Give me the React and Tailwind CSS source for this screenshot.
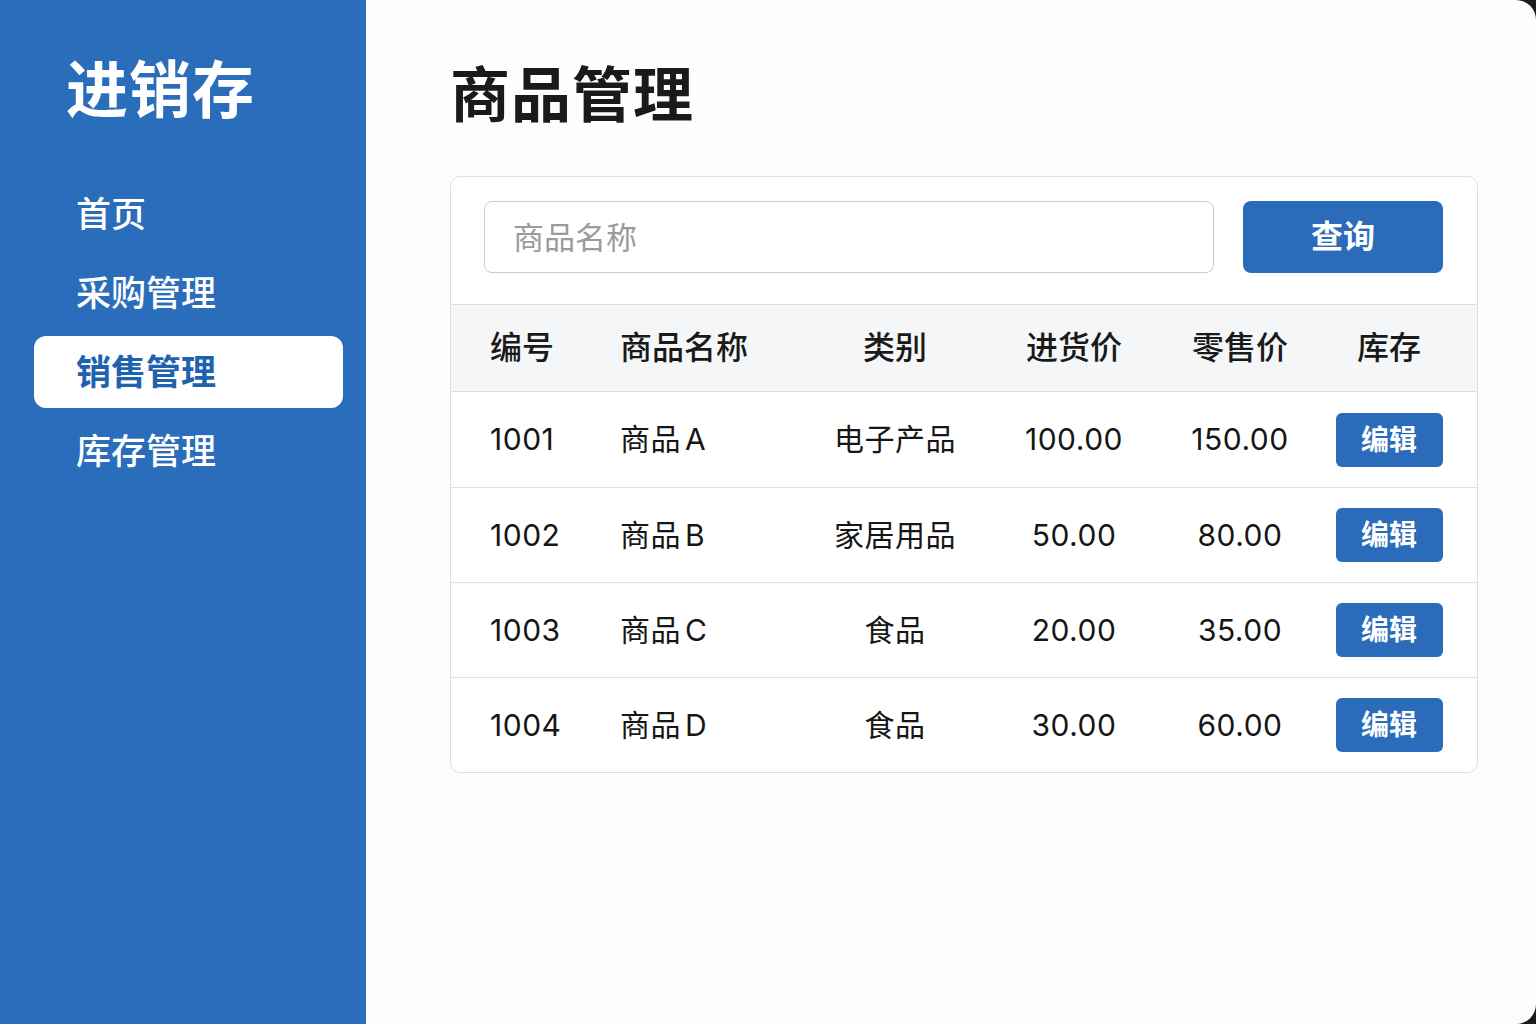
import React, { useState } from 'react';

const FONT = { fontFamily: 'Inter, "Noto Sans CJK SC", "Noto Sans", sans-serif' };

const navItems = ['首页', '采购管理', '销售管理', '库存管理'];

const products = [
  { id: '1001', name: '商品A', category: '电子产品', cost: '100.00', price: '150.00' },
  { id: '1002', name: '商品B', category: '家居用品', cost: '50.00', price: '80.00' },
  { id: '1003', name: '商品C', category: '食品', cost: '20.00', price: '35.00' },
  { id: '1004', name: '商品D', category: '食品', cost: '30.00', price: '60.00' },
];

// fixed column widths so header and rows line up
const cols = 'grid grid-cols-[130px_200px_150px_208px_124px_174px] pl-[39px] items-center';

const Sidebar = ({ active, onSelect }) => (
  <aside className="w-[366px] shrink-0 bg-[#2a6dba] pt-[60px] pl-[34px] pr-[23px]">
    <div className="pl-[32px] text-[62px] leading-[62px] font-bold text-white tracking-[1px]">进销存</div>
    <nav className="mt-[56px] flex flex-col gap-[7px]">
      {navItems.map((item) => (
        <button
          key={item}
          onClick={() => onSelect(item)}
          className={
            item === active
              ? 'h-[72px] rounded-[12px] bg-white pl-[42px] text-left text-[35px] font-bold text-[#1f62b0]'
              : 'h-[72px] rounded-[12px] pl-[42px] text-left text-[35px] font-medium text-white'
          }
        >
          {item}
        </button>
      ))}
    </nav>
  </aside>
);

const App = () => {
  const [active, setActive] = useState('销售管理');
  const [keyword, setKeyword] = useState('');

  return (
    <div className="flex h-[1024px] w-[1536px] bg-[#1b1b1b]" style={FONT}>
      <Sidebar active={active} onSelect={setActive} />

      <main className="flex-1 bg-[#fdfdfc] rounded-tr-[20px] rounded-br-[20px] pl-[84px] pr-[58px] pt-[65px]">
        <h1 className="text-[60px] leading-[60px] font-bold text-[#1a1a1a] tracking-[1px]">商品管理</h1>

        <div className="mt-[51px] rounded-[10px] border border-[#dadde1] bg-white overflow-hidden">
          {/* search row */}
          <div className="flex gap-[29px] pt-[24px] pb-[31px] pl-[33px] pr-[34px]">
            <input
              value={keyword}
              onChange={(e) => setKeyword(e.target.value)}
              placeholder="商品名称"
              className="h-[72px] flex-1 rounded-[8px] border border-[#c9cdd2] bg-white px-[28px] text-[31px] text-[#222] placeholder:text-[#9b9b9b] outline-none"
            />
            <button className="h-[72px] w-[200px] rounded-[8px] bg-[#2a6cb9] text-[32px] font-bold text-white">
              查询
            </button>
          </div>

          {/* table header */}
          <div className={`${cols} h-[88px] border-y border-[#dcdfe3] bg-[#f5f6f7] text-[32px] font-medium text-[#1a1a1a]`}>
            <div>编号</div>
            <div>商品名称</div>
            <div className="text-center">类别</div>
            <div className="text-center">进货价</div>
            <div className="text-center">零售价</div>
            <div className="text-center">库存</div>
          </div>

          {/* rows */}
          {products.map((p, i) => (
            <div
              key={p.id}
              className={`${cols} h-[95px] text-[30px] tracking-[0.5px] text-[#161616] ${i > 0 ? 'border-t border-[#dcdfe3]' : ''}`}
            >
              <div>{p.id}</div>
              <div>
                商品<span className="pl-[4px]">{p.name.slice(2)}</span>
              </div>
              <div className="text-center">{p.category}</div>
              <div className="text-center">{p.cost}</div>
              <div className="text-center">{p.price}</div>
              <div className="flex justify-center">
                <button className="h-[54px] w-[107px] rounded-[6px] bg-[#2a6cb9] text-[28px] font-bold tracking-normal text-white">
                  编辑
                </button>
              </div>
            </div>
          ))}
        </div>
      </main>
    </div>
  );
};

export default App;
